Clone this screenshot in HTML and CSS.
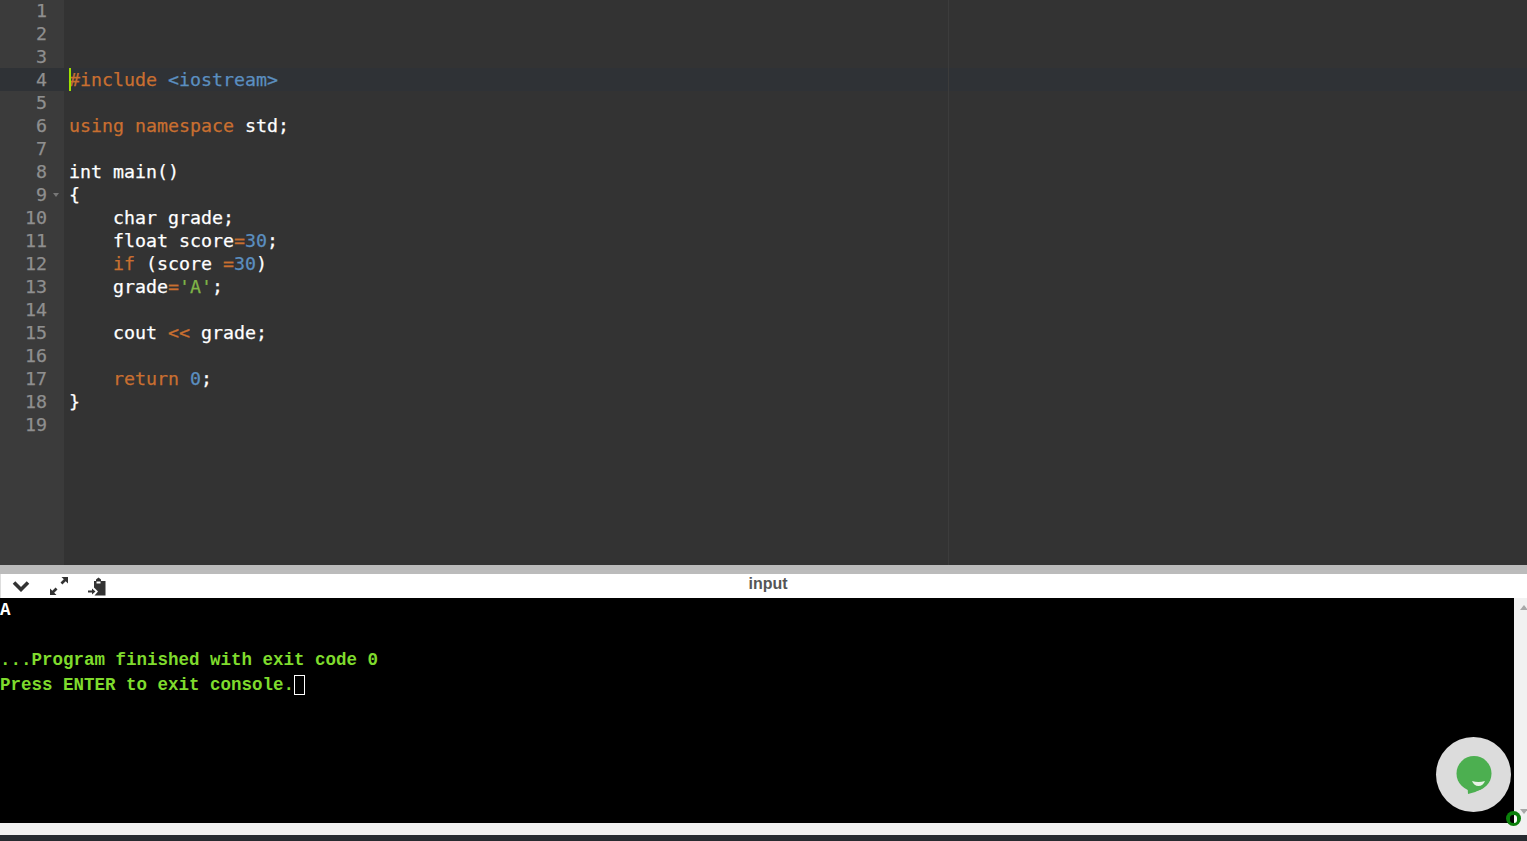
FILE: index.html
```html
<!DOCTYPE html>
<html lang="en">
<head>
<meta charset="utf-8">
<title>Online C++ Compiler</title>
<link rel="stylesheet" href="styles.css">
</head>
<body>
<main class="app">
  <section class="editor">
    <div class="lines">
      <div class="line"><span class="num">1</span><code class="code"></code></div>
      <div class="line"><span class="num">2</span><code class="code"></code></div>
      <div class="line"><span class="num">3</span><code class="code"></code></div>
      <div class="line active"><span class="num">4</span><code class="code"><i class="caret"></i><span class="kw">#include</span> <span class="val">&lt;iostream&gt;</span></code></div>
      <div class="line"><span class="num">5</span><code class="code"></code></div>
      <div class="line"><span class="num">6</span><code class="code"><span class="kw">using</span> <span class="kw">namespace</span> std;</code></div>
      <div class="line"><span class="num">7</span><code class="code"></code></div>
      <div class="line"><span class="num">8</span><code class="code">int main()</code></div>
      <div class="line"><span class="num fold">9</span><code class="code">{</code></div>
      <div class="line"><span class="num">10</span><code class="code">    char grade;</code></div>
      <div class="line"><span class="num">11</span><code class="code">    float score<span class="kw">=</span><span class="val">30</span>;</code></div>
      <div class="line"><span class="num">12</span><code class="code">    <span class="kw">if</span> (score <span class="kw">=</span><span class="val">30</span>)</code></div>
      <div class="line"><span class="num">13</span><code class="code">    grade<span class="kw">=</span><span class="str">'A'</span>;</code></div>
      <div class="line"><span class="num">14</span><code class="code"></code></div>
      <div class="line"><span class="num">15</span><code class="code">    cout <span class="kw">&lt;&lt;</span> grade;</code></div>
      <div class="line"><span class="num">16</span><code class="code"></code></div>
      <div class="line"><span class="num">17</span><code class="code">    <span class="kw">return</span> <span class="val">0</span>;</code></div>
      <div class="line"><span class="num">18</span><code class="code">}</code></div>
      <div class="line"><span class="num">19</span><code class="code"></code></div>
    </div>
    <div class="print-margin"></div>
  </section>
  <div class="splitter"></div>
  <header class="toolbar">
    <div class="tools">
      <svg class="icon" width="18" height="12" viewBox="0 0 18 12"><path d="M2 2.500 9 9.500 16 2.500" fill="none" stroke="#333" stroke-width="3.600"/></svg>
      <svg class="icon" width="20" height="20" viewBox="0 0 20 20"><path d="M12.500 1H19V7.500L16.700 5.200 13.400 8.500 11.500 6.600 14.800 3.300ZM7.500 19H1V12.500L3.300 14.800 6.600 11.500 8.500 13.400 5.200 16.700Z" fill="#333"/></svg>
      <svg class="icon" width="18" height="19" viewBox="0 0 18 19"><path d="M6 4H8V2.500L10.500 .5 13 2.500V4H17.500V18.500H6.500L10 14.500 6 10.500ZM8.500 4.500V6.500H12.500V4.500Z" fill="#333" fill-rule="evenodd"/><path d="M0 13.500H4V11.500L7.500 14.500 4 17.500V15.500H0Z" fill="#333"/></svg>
    </div>
    <span class="title">input</span>
  </header>
  <section class="console-row">
    <pre class="console"><span class="out">A</span>

<span class="ok">...Program finished with exit code 0</span>
<span class="ok">Press ENTER to exit console.</span><i class="cursor"></i></pre>
    <div class="vscroll">
      <i class="arrow up"></i>
      <i class="arrow down"></i>
    </div>
  </section>
  <div class="hscroll"></div>
  <div class="footer"></div>
</main>
<button class="chat" aria-label="Chat">
  <svg width="36" height="39" viewBox="0 0 36 39"><circle cx="18" cy="17.500" r="17.500" fill="#4caf50"/><path d="M11.500 30 12 38Q20 36.500 27 32Z" fill="#4caf50"/><path d="M16 25Q22.500 27 29 25 27 30 22.500 30T16 25Z" fill="#e8f3e6"/></svg>
</button>
<div class="badge"><i></i></div>
</body>
</html>
```
FILE: styles.css
```css
* { box-sizing: border-box; }
html, body { margin: 0; height: 100%; overflow: hidden; }
body { background: #262b30; }
.app { display: flex; flex-direction: column; height: 841px; }
.editor {
  position: relative;
  flex: 0 0 565px;
  overflow: hidden;
  background: linear-gradient(to right, #3b3b3b 64px, #333 64px);
  font: 18.27px/23px "DejaVu Sans Mono", "Liberation Mono", monospace;
  -webkit-text-stroke: 0.25px currentColor;
}
.lines { margin-top: -1px; }
.line { display: flex; height: 23px; color: #fff; }
.active { background: #2f3236; }
.num {
  position: relative;
  flex: 0 0 64px;
  padding-right: 17px;
  text-align: right;
  color: #8f8f8f;
}
.fold::after {
  content: "";
  position: absolute;
  left: 53px;
  top: 10px;
  border: 3px solid transparent;
  border-top: 4px solid #777;
  border-bottom: 0;
}
.code {
  position: relative;
  flex: 1;
  padding-left: 5px;
  font: inherit;
  white-space: pre;
}
.caret {
  position: absolute;
  left: 5px;
  top: 0;
  width: 2px;
  height: 23px;
  background: #9fe000;
}
.kw { color: #c96f30; }
.val { color: #5b8fc0; }
.str { color: #7fb347; }
.print-margin {
  position: absolute;
  left: 948px;
  top: 0;
  bottom: 0;
  width: 1px;
  background: #3c3c3c;
}
.splitter { flex: 0 0 9px; background: #bbb; }
.toolbar {
  position: relative;
  display: flex;
  align-items: center;
  justify-content: center;
  flex: 0 0 24px;
  background: #fff;
  border-left: 1px solid #ddd;
}
.tools {
  position: absolute;
  left: 11px;
  top: 1px;
  display: flex;
  align-items: center;
  gap: 19px;
  height: 22px;
}
.icon { display: block; }
.title {
  font: bold 16px/20px "Liberation Sans", Arial, sans-serif;
  color: #555;
  margin: -4px 0 0 8px;
}
.console-row { display: flex; flex: 0 0 225px; }
.console {
  flex: 1;
  margin: 0;
  overflow: hidden;
  background: #000;
  font: bold 17.5px/25px "Liberation Mono", "Courier New", monospace;
}
.out { color: #fff; }
.ok { color: #7fdb2d; }
.cursor {
  display: inline-block;
  width: 11px;
  height: 20px;
  border: 1px solid #fff;
  vertical-align: -5px;
}
.vscroll { position: relative; flex: 0 0 13px; background: #f1f1f1; }
.arrow {
  position: absolute;
  left: 6px;
  width: 0;
  height: 0;
  border-left: 4px solid transparent;
  border-right: 4px solid transparent;
}
.up { top: 7px; border-bottom: 5px solid #a8a8a8; }
.down { top: 211px; border-top: 5px solid #a8a8a8; }
.hscroll { flex: 0 0 12px; background: #f1f1f1; }
.footer { flex: 1; background: #262b30; }
.chat {
  position: absolute;
  left: 1436px;
  top: 737px;
  display: flex;
  align-items: flex-start;
  justify-content: flex-start;
  width: 75px;
  height: 75px;
  padding: 19px 0 0 20px;
  border: 0;
  border-radius: 50%;
  background: #dcdcdc;
}
.badge {
  position: absolute;
  left: 1506px;
  top: 811px;
  display: flex;
  align-items: center;
  justify-content: center;
  width: 15px;
  height: 15px;
  border-radius: 50%;
  background: #0a800a;
}
.badge i { width: 7px; height: 8px; border-radius: 3px; background: linear-gradient(to right, #000 55%, #fff 55%); }
```
